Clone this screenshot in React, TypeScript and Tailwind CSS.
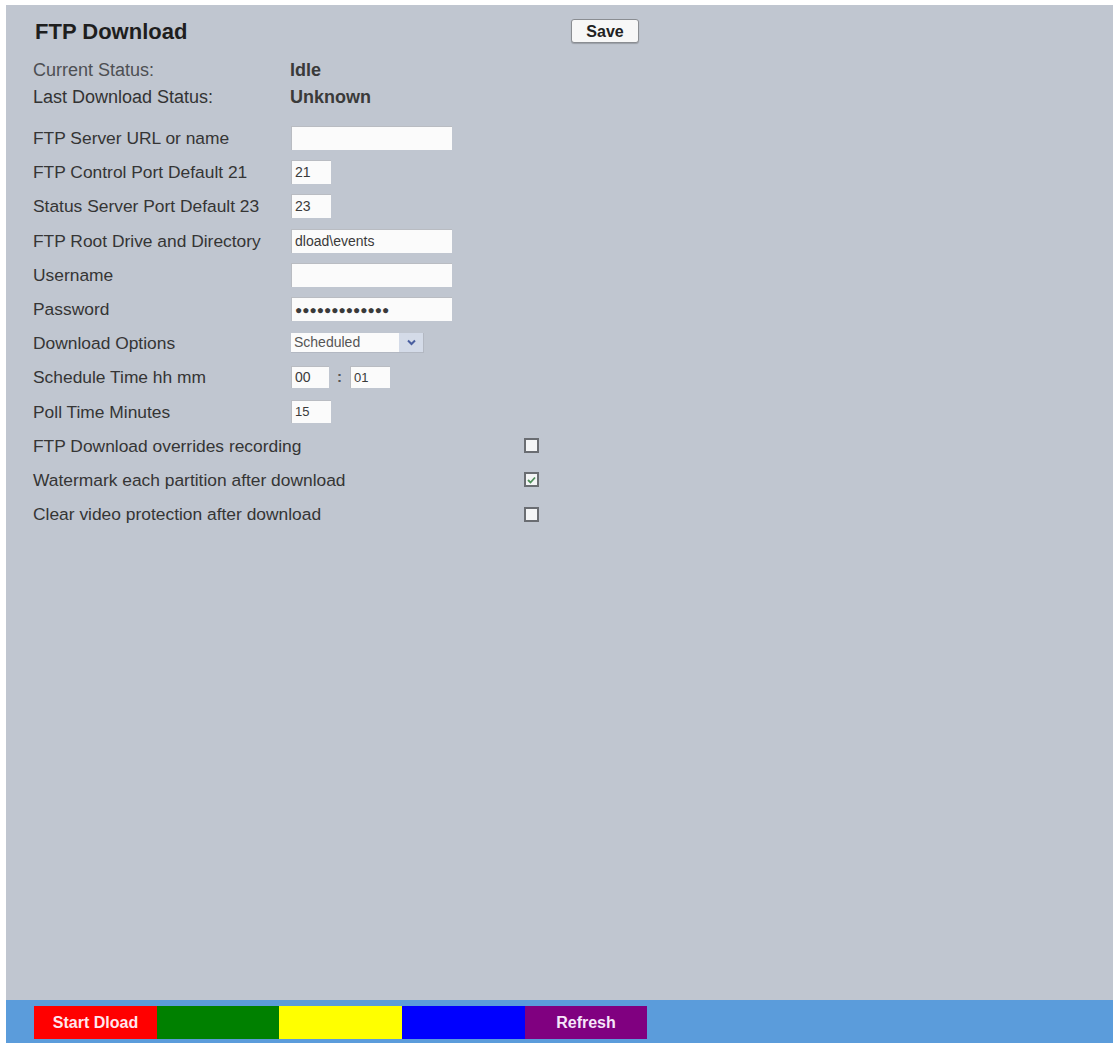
import React from "react";

const font = { fontFamily: '"Liberation Sans", Arial, sans-serif' };

function TextBox({ w, value = "", h = "h-[24px]", size = "text-[14px]" }: { w: string; value?: string; h?: string; size?: string }) {
  return (
    <div className={`${w} ${h} bg-[#fbfbfb] border-t border-l border-[#b9bcc2] flex items-center pl-[3px] text-[#3a3a3a] ${size}`}>
      {value}
    </div>
  );
}

function Row({ label, children }: { label: string; children?: React.ReactNode }) {
  return (
    <div className="grid grid-cols-[258px_1fr] items-center h-[34.2px]">
      <span className="text-[17.4px] text-[#353535] whitespace-nowrap">{label}</span>
      <div className="flex items-center">{children}</div>
    </div>
  );
}

function CheckRow({ label, checked = false }: { label: string; checked?: boolean }) {
  return (
    <div className="flex items-center h-[34.2px]">
      <span className="w-[491px] text-[17.4px] text-[#353535]">{label}</span>
      <div className="w-[15px] h-[15px] border-2 border-[#6a6d72] bg-[#f4f5f6] flex items-center justify-center">
        {checked && (
          <svg width="9" height="8" viewBox="0 0 9 8">
            <path d="M1 4 L3.5 6.5 L8 1.5" fill="none" stroke="#4f8f5a" strokeWidth="1.8" />
          </svg>
        )}
      </div>
    </div>
  );
}

export default function App() {
  return (
    <div className="h-[1045px] bg-white pt-[5px] pl-[6px] pr-[5px] pb-[2px] flex flex-col" style={font}>
      <div className="flex-1 bg-[#c0c6d0] pl-[27px]">
        <div className="flex items-center h-[28px] mt-[12px]">
          <h1 className="w-[538px] pl-[2px] text-[22px] font-bold text-[#1e1e1e]">FTP Download</h1>
          <button className="w-[68px] h-[24px] bg-[#f7f7f7] border border-[#8a8d92] rounded-[3px] text-[16px] font-bold text-[#222] shadow-[0_1px_1px_rgba(0,0,0,0.2)]">
            Save
          </button>
        </div>

        <div className="mt-[12px]">
          <div className="grid grid-cols-[257px_1fr] items-center h-[27px]">
            <span className="text-[18px] text-[#4d4f53]">Current Status:</span>
            <span className="text-[18px] font-bold text-[#3a3a3a]">Idle</span>
          </div>
          <div className="grid grid-cols-[257px_1fr] items-center h-[27px]">
            <span className="text-[18px] text-[#333]">Last Download Status:</span>
            <span className="text-[18px] font-bold text-[#3a3a3a]">Unknown</span>
          </div>
        </div>

        <div className="mt-[10px]">
          <Row label="FTP Server URL or name">
            <TextBox w="w-[161px]" />
          </Row>
          <Row label="FTP Control Port Default 21">
            <TextBox w="w-[40px]" value="21" />
          </Row>
          <Row label="Status Server Port Default 23">
            <TextBox w="w-[40px]" value="23" />
          </Row>
          <Row label="FTP Root Drive and Directory">
            <TextBox w="w-[161px]" value="dload\events" />
          </Row>
          <Row label="Username">
            <TextBox w="w-[161px]" />
          </Row>
          <Row label="Password">
            <TextBox w="w-[161px]" value="●●●●●●●●●●●●●" size="text-[12px]" />
          </Row>
          <Row label="Download Options">
            <div className="w-[133px] h-[20px] flex bg-[#fbfbfb] border-b border-r border-[#b3b8c2]">
              <span className="flex-1 flex items-center pl-[3px] text-[14px] text-[#555]">Scheduled</span>
              <span className="w-[24px] flex items-center justify-center bg-[#d4dbe8]">
                <svg width="9" height="7" viewBox="0 0 9 7">
                  <path d="M1 1.5 L4.5 5 L8 1.5" fill="none" stroke="#4a5fa0" strokeWidth="2" />
                </svg>
              </span>
            </div>
          </Row>
          <Row label="Schedule Time hh mm">
            <TextBox w="w-[38px]" h="h-[22px]" value="00" />
            <span className="w-[21px] text-center text-[15px] font-bold text-[#555]">:</span>
            <TextBox w="w-[40px]" h="h-[22px]" value="01" size="text-[13px]" />
          </Row>
          <Row label="Poll Time Minutes">
            <TextBox w="w-[40px]" h="h-[23px]" value="15" size="text-[13px]" />
          </Row>
          <CheckRow label="FTP Download overrides recording" />
          <CheckRow label="Watermark each partition after download" checked />
          <CheckRow label="Clear video protection after download" />
        </div>
      </div>

      <div className="h-[43px] bg-[#5b9cdb] pl-[28px] pt-[6px]">
        <div className="flex h-[33px] text-[16px] font-bold text-white">
          <div className="w-[123px] bg-[#ff0000] flex items-center justify-center text-[#ffe6ee]">Start Dload</div>
          <div className="w-[122px] bg-[#008000]" />
          <div className="w-[123px] bg-[#ffff00]" />
          <div className="w-[123px] bg-[#0000ff]" />
          <div className="w-[122px] bg-[#800080] flex items-center justify-center text-[#f6e6fa]">Refresh</div>
        </div>
      </div>
    </div>
  );
}
